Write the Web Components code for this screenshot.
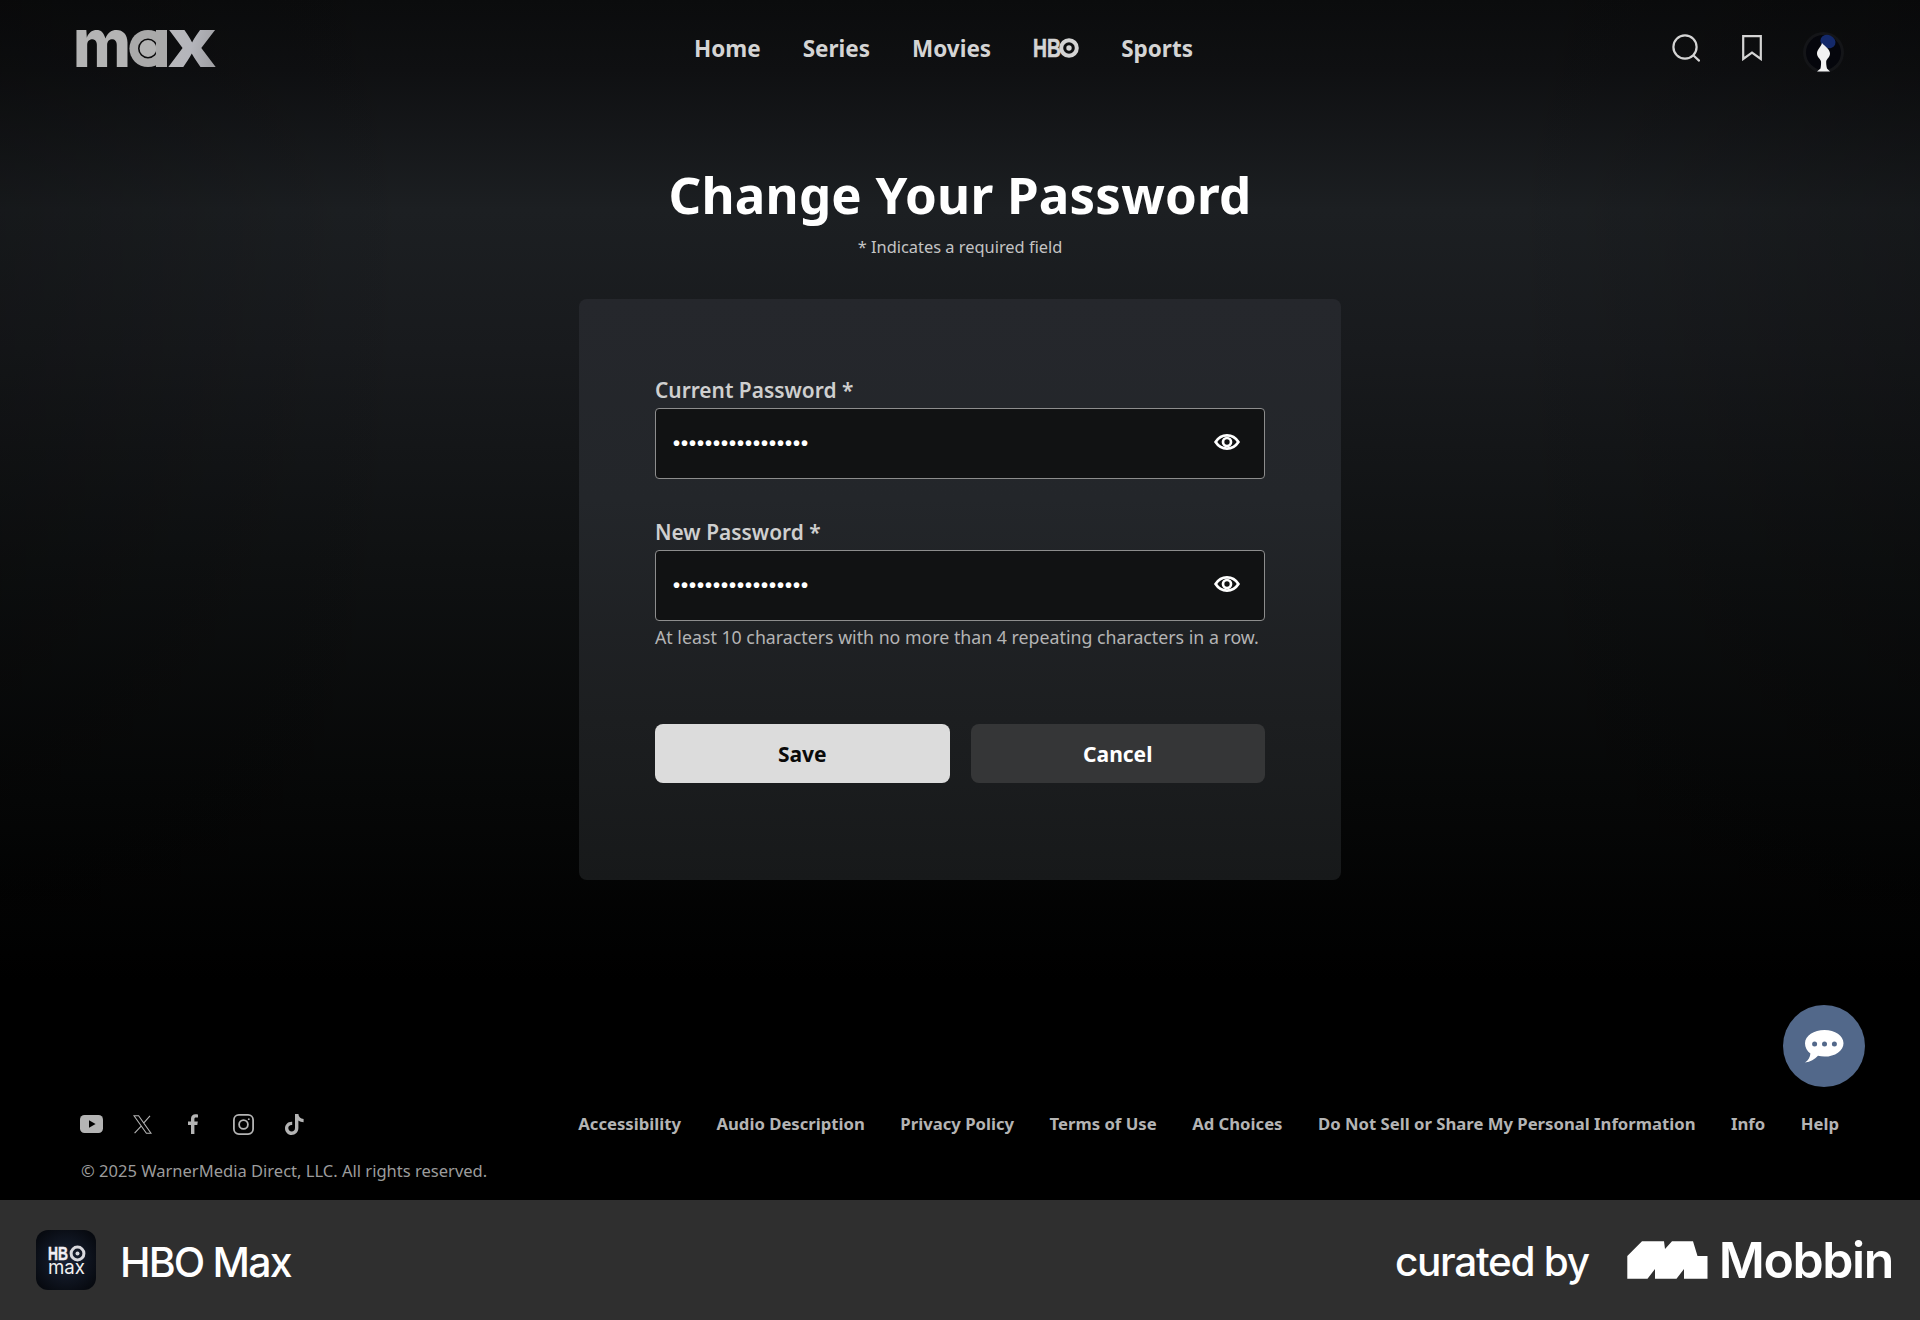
<!DOCTYPE html>
<html lang="en">
<head>
<meta charset="utf-8">
<title>Change Your Password</title>
<style>
html, body { margin: 0; padding: 0; background: #000; }
body { font-family: "Noto Sans", sans-serif; color: #fff; }
</style>
</head>
<body>
<app-page>
  <site-header slot="header"></site-header>
  <page-heading slot="main" title="Change Your Password" note="* Indicates a required field"></page-heading>
  <form-card slot="main">
    <password-field label="Current Password *"></password-field>
    <password-field label="New Password *" hint="At least 10 characters with no more than 4 repeating characters in a row."></password-field>
    <action-button slot="actions" kind="primary">Save</action-button>
    <action-button slot="actions">Cancel</action-button>
  </form-card>
  <chat-button slot="main"></chat-button>
  <site-footer slot="footer"></site-footer>
  <curated-bar slot="bar"></curated-bar>
</app-page>

<script>
class AppPage extends HTMLElement {
  constructor() {
    super();
    this.attachShadow({mode: "open"}).innerHTML = `<style>
      :host { display: flex; flex-direction: column; width: 1920px; height: 1320px; overflow: hidden; position: relative; }
      .screen { flex: 1; display: flex; flex-direction: column; min-height: 0;
        background:
          linear-gradient(90deg, rgba(0,0,0,.22) 0, rgba(0,0,0,0) 420px, rgba(0,0,0,0) 1500px, rgba(0,0,0,.22) 100%),
          linear-gradient(180deg, #0b0c0d 0, #0f1012 70px, #1c1f22 210px, #181a1d 350px, #0f1112 560px, #060707 800px, #000 980px); }
      main { flex: 1; display: flex; flex-direction: column; align-items: center; min-height: 0; }
    </style>
    <div class="screen">
      <slot name="header"></slot>
      <main><slot name="main"></slot></main>
      <slot name="footer"></slot>
    </div>
    <slot name="bar"></slot>`;
  }
}

class SiteHeader extends HTMLElement {
  constructor() {
    super();
    this.attachShadow({mode: "open"}).innerHTML = `<style>
      :host { display: grid; grid-template-columns: 1fr auto 1fr; align-items: center; height: 96px; padding: 0 76px; box-sizing: border-box; }
      .logo { display: block; margin: -15px 0 -3px -6px; }
      nav { display: flex; align-items: center; gap: 42px; font-size: 22.5px; font-weight: 700; color: #d4d4d4; margin-right: 33px; }
      nav svg { display: block; margin: -10px 0; }
      .tools { display: flex; align-items: center; justify-content: flex-end; }
      .tools svg { display: block; }
      .search { margin-right: 42px; }
      .mark { margin-right: 41px; }
      .avatar { margin-top: 8px; margin-bottom: 8px; position: relative; top: 4px; }
    </style>
    <svg class="logo" width="148" height="90" viewBox="-6 0 148 90" aria-label="max">
      <defs><linearGradient id="silver" x1="0" y1="0" x2="1" y2="0.3">
        <stop offset="0" stop-color="#b8b8ba"/><stop offset=".6" stop-color="#b4b5bb"/><stop offset="1" stop-color="#a2a2a6"/>
      </linearGradient></defs>
      <text x="-3" y="70" font-family="Inter, sans-serif" font-weight="800" font-size="67" textLength="58" lengthAdjust="spacingAndGlyphs" fill="#b4b4b4">m</text>
      <circle cx="72" cy="51.5" r="18.6" fill="#a9a9a9"/>
      <circle cx="72" cy="51.5" r="9.2" fill="#b2b2b2" stroke="#0b0b0c" stroke-width="1.6"/>
      <rect x="80" y="33" width="11" height="37" fill="#a9a9a9"/>
      <text x="91" y="70" font-family="Inter, sans-serif" font-weight="800" font-size="67" textLength="50" lengthAdjust="spacingAndGlyphs" fill="url(#silver)">x</text>
    </svg>
    <nav>
      <span>Home</span><span>Series</span><span>Movies</span>
      <svg width="46" height="40" viewBox="0 0 46 40" aria-label="HBO">
        <text x="0" y="29" font-family="Liberation Sans, sans-serif" font-weight="700" font-size="26" textLength="28" lengthAdjust="spacingAndGlyphs" fill="#d4d4d4" stroke="#d4d4d4" stroke-width=".6">HB</text>
        <circle cx="36" cy="20" r="7.8" fill="none" stroke="#d4d4d4" stroke-width="4"/>
        <circle cx="36" cy="20" r="2.7" fill="#d4d4d4"/>
      </svg>
      <span>Sports</span>
    </nav>
    <div class="tools">
      <svg class="search" width="28" height="28" viewBox="0 0 28 28" fill="none" stroke="#d4d4d4" stroke-width="2.2" stroke-linecap="round"><circle cx="13" cy="13" r="11.6"/><path d="M21.8 21.8 27 26.6"/></svg>
      <svg class="mark" width="20" height="26" viewBox="0 0 20 26" fill="none" stroke="#d4d4d4" stroke-width="2.2"><path d="M1.2 1.2H18.8V24L10 17.6 1.2 24Z"/></svg>
      <svg class="avatar" width="41" height="41" viewBox="0 0 41 41">
        <circle cx="20.5" cy="20.5" r="20.5" fill="#141518"/>
        <circle cx="20.5" cy="20.5" r="17.5" fill="#05060c"/>
        <ellipse cx="25" cy="9.5" rx="7.8" ry="6.4" fill="#14296a" transform="rotate(25 25 9.5)"/>
        <path d="M19 11C21.5 14 27 17 27 21.5C27 25 23.5 27 23.2 29.5C23.1 31.5 23.4 34 24 36.5L27 39.6H14L17.5 36.5C18 34 18.2 31.5 18 29.5C17.6 27 14 25 14 21.5C14 17.5 18 15 19 11Z" fill="#f2f2f2"/>
      </svg>
    </div>`;
  }
}

class PageHeading extends HTMLElement {
  constructor() {
    super();
    this.attachShadow({mode: "open"}).innerHTML = `<style>
      :host { display: flex; flex-direction: column; align-items: center; margin-top: 63px; }
      h1 { margin: 0; font-size: 51px; line-height: 70px; font-weight: 700; letter-spacing: .2px; color: #fff; }
      p { margin: 6px 0 0; font-size: 16.4px; line-height: 24px; color: #c4c4c4; }
    </style>
    <h1></h1><p></p>`;
    this.shadowRoot.querySelector("h1").textContent = this.getAttribute("title");
    this.shadowRoot.querySelector("p").textContent = this.getAttribute("note");
  }
}

class FormCard extends HTMLElement {
  constructor() {
    super();
    this.attachShadow({mode: "open"}).innerHTML = `<style>
      :host { display: block; width: 762px; height: 581px; box-sizing: border-box; margin-top: 40px; padding: 77px 76px 0; border-radius: 8px;
        background: linear-gradient(180deg, #25272c 0, #23262a 200px, #1c1e20 420px, #17191a 100%); }
      .fields { display: flex; flex-direction: column; gap: 39px; }
      .actions { display: grid; grid-template-columns: 1fr 1fr; gap: 21px; margin-top: 103px; }
    </style>
    <div class="fields"><slot></slot></div>
    <div class="actions"><slot name="actions"></slot></div>`;
  }
}

class PasswordField extends HTMLElement {
  constructor() {
    super();
    this.attachShadow({mode: "open"}).innerHTML = `<style>
      :host { display: block; position: relative; }
      label { display: block; font-size: 20.9px; line-height: 28px; font-weight: 600; color: #cfcfcf; margin-bottom: 4px; }
      .box { display: flex; align-items: center; height: 71px; box-sizing: border-box; padding: 0 24px 0 17px; background: #111213; border: 1px solid #8d8d8d; border-radius: 4px; }
      input { flex: 1; min-width: 0; border: 0; outline: 0; padding: 0; background: none; color: #fff; font: 700 20px "Liberation Sans", sans-serif; letter-spacing: 1px; }
      svg { display: block; margin-top: -3px; }
      .hint { position: absolute; left: 0; top: 107px; white-space: nowrap; font-size: 17.75px; line-height: 24px; color: #b4b4b4; }
    </style>
    <label></label>
    <div class="box">
      <input type="password" value="passwordpassword!" readonly tabindex="-1">
      <svg width="26" height="16" viewBox="0 0 26 16" fill="none" stroke="#fff" stroke-width="2.7"><path d="M1.6 8C4.4 3.6 8.4 1.4 13 1.4S21.6 3.6 24.4 8C21.6 12.4 17.6 14.6 13 14.6S4.4 12.4 1.6 8Z"/><circle cx="13" cy="8" r="4"/></svg>
    </div>
    <div class="hint"></div>`;
    this.shadowRoot.querySelector("label").textContent = this.getAttribute("label");
    this.shadowRoot.querySelector(".hint").textContent = this.getAttribute("hint") || "";
  }
}

class ActionButton extends HTMLElement {
  constructor() {
    super();
    this.attachShadow({mode: "open"}).innerHTML = `<style>
      :host { display: flex; align-items: center; justify-content: center; height: 59px; border-radius: 8px; font-size: 21px; font-weight: 700; background: #353637; color: #fff; }
      :host([kind="primary"]) { background: #dcdcdc; color: #0a0a0a; }
    </style><slot></slot>`;
  }
}

class ChatButton extends HTMLElement {
  constructor() {
    super();
    this.attachShadow({mode: "open"}).innerHTML = `<style>
      :host { display: flex; align-items: center; justify-content: center; position: absolute; left: 1783px; top: 1005px; width: 82px; height: 82px; border-radius: 50%; background: #52688a; }
      svg { display: block; }
    </style>
    <svg width="40" height="35" viewBox="0 0 40 35">
      <path d="M20.5 1C31 1 39.5 6.6 39.5 14.2S31 27.6 20.5 27.6C18.2 27.6 16 27.3 14 26.8C10.5 30.2 6.5 33 1 33.6C4.4 31 6.2 27.8 6.4 24.4C3 22 1 18.4 1 14.2C1 6.6 10 1 20.5 1Z" fill="#fff"/>
      <circle cx="10.6" cy="15" r="2.5" fill="#52688a"/><circle cx="20.5" cy="15" r="2.5" fill="#52688a"/><circle cx="30.4" cy="15" r="2.5" fill="#52688a"/>
    </svg>`;
  }
}

class SiteFooter extends HTMLElement {
  constructor() {
    super();
    this.attachShadow({mode: "open"}).innerHTML = `<style>
      :host { display: block; padding: 0 81px 17px 80px; color: #b8b8b8; }
      .row { display: flex; align-items: center; justify-content: space-between; height: 24px; }
      .social { display: flex; align-items: center; }
      .social svg { display: block; fill: #b4b4b4; }
      .links { display: flex; gap: 35.5px; font-size: 16.7px; font-weight: 700; color: #b4b4b4; margin-top: -2px; }
      p { margin: 23px 0 0 1px; font-size: 16.55px; line-height: 24px; color: #9c9c9c; }
    </style>
    <div class="row">
      <div class="social">
        <svg width="23" height="18" viewBox="0 0 23 18" style="margin-right:30px"><rect width="23" height="18" rx="4.5"/><path d="M9 5.2V12.8L15.6 9Z" fill="#000"/></svg>
        <svg width="19" height="19" viewBox="0 0 19 19" style="margin-right:36px;fill:none;stroke:#b4b4b4;stroke-width:1.1"><path d="M1 .8H5.6L18 18.2H13.4ZM17 .8 10.4 8.4M8.6 10.6 1.6 18.2"/></svg>
        <svg width="10" height="20" viewBox="0 0 10 20" style="margin-right:35px"><path d="M3 20V11H0V7.4H3V4.8C3 1.8 4.8.2 7.4.2C8.6.2 9.6.3 10 .4V3.6H8.1C6.6 3.6 6.4 4.3 6.4 5.3V7.4H9.8L9.3 11H6.4V20Z"/></svg>
        <svg width="21" height="21" viewBox="0 0 21 21" style="margin-right:31px;fill:none;stroke:#b4b4b4;stroke-width:1.8"><rect x=".9" y=".9" width="19.2" height="19.2" rx="5"/><circle cx="10.5" cy="10.5" r="4.4"/><circle cx="15.8" cy="5.2" r=".9" fill="#b4b4b4" stroke="none"/></svg>
        <svg width="19" height="21" viewBox="0 0 19 21"><path d="M10 0H13.4C13.6 2.8 15.6 4.8 18.6 5V8.3C16.6 8.3 14.9 7.7 13.4 6.6V14C13.4 18 10.4 21 6.6 21C3 21 0 18 0 14.2C0 10.4 3.2 7.3 7.2 7.7V11.1C5 10.7 3.3 12.2 3.3 14.1C3.3 16 4.8 17.6 6.7 17.6C8.6 17.6 10 16 10 14Z"/></svg>
      </div>
      <div class="links">
        <span>Accessibility</span><span>Audio Description</span><span>Privacy Policy</span><span>Terms of Use</span><span>Ad Choices</span><span>Do Not Sell or Share My Personal Information</span><span>Info</span><span>Help</span>
      </div>
    </div>
    <p>© 2025 WarnerMedia Direct, LLC. All rights reserved.</p>`;
  }
}

class CuratedBar extends HTMLElement {
  constructor() {
    super();
    this.attachShadow({mode: "open"}).innerHTML = `<style>
      :host { display: flex; align-items: center; justify-content: space-between; height: 120px; flex: none; padding: 0 27px 0 36px; background: #2f2f2f; color: #fff; font-family: Inter, sans-serif; }
      .app, .brand { display: flex; align-items: center; }
      .icon { display: block; margin-right: 24px; }
      .name { font-size: 41px; font-weight: 500; letter-spacing: -1.8px; margin-top: 3px; }
      .curated { font-size: 40.5px; font-weight: 500; letter-spacing: -1.3px; margin: 3px 38px 0 0; }
      .mark { display: block; margin-right: 11px; }
      .mobbin { font-size: 50px; font-weight: 600; letter-spacing: -1.4px; }
    </style>
    <div class="app">
      <svg class="icon" width="60" height="60" viewBox="0 0 60 60">
        <defs><radialGradient id="navy" cx=".5" cy=".5" r=".6"><stop offset="0" stop-color="#1a2336"/><stop offset="1" stop-color="#070a10"/></radialGradient></defs>
        <rect width="60" height="60" rx="12" fill="url(#navy)"/>
        <text x="12" y="30" font-family="Liberation Sans, sans-serif" font-weight="700" font-size="18" textLength="20" lengthAdjust="spacingAndGlyphs" fill="#f2eef4" stroke="#f2eef4" stroke-width=".4">HB</text>
        <circle cx="41.5" cy="23.5" r="6.4" fill="none" stroke="#d9d9de" stroke-width="3"/>
        <circle cx="41.5" cy="23.5" r="2" fill="#d9d9de"/>
        <text x="12" y="44" font-family="Inter, sans-serif" font-size="20" textLength="37" lengthAdjust="spacingAndGlyphs" fill="#f2f2f2">max</text>
      </svg>
      <span class="name">HBO Max</span>
    </div>
    <div class="brand">
      <span class="curated">curated by</span>
      <svg class="mark" width="81" height="38" viewBox="7 8 81 38"><path fill="#fff" d="M7.3 23 22 8.3H44L45 16 52 8.3H73L77.5 23H87.5V45.7H64V36L56.5 45.7H35V36L27.5 45.7H7.3Z"/></svg>
      <span class="mobbin">Mobbin</span>
    </div>`;
  }
}

customElements.define("app-page", AppPage);
customElements.define("site-header", SiteHeader);
customElements.define("page-heading", PageHeading);
customElements.define("form-card", FormCard);
customElements.define("password-field", PasswordField);
customElements.define("action-button", ActionButton);
customElements.define("chat-button", ChatButton);
customElements.define("site-footer", SiteFooter);
customElements.define("curated-bar", CuratedBar);
</script>
</body>
</html>
